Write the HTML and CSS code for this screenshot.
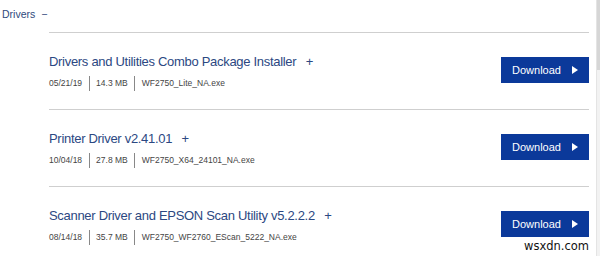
FILE: index.html
```html
<!DOCTYPE html>
<html>
<head>
<meta charset="utf-8">
<link rel="stylesheet" href="styles.css">
</head>
<body>
<div class="page">
  <div class="content">
    <div class="section-head">Drivers <span class="toggle">&minus;</span></div>
    <div class="items">
      <div class="item">
        <div class="info">
          <div class="title">Drivers and Utilities Combo Package Installer <span class="plus">+</span></div>
          <div class="meta"><span class="m first">05/21/19</span><span class="m">14.3 MB</span><span class="m">WF2750_Lite_NA.exe</span></div>
        </div>
        <a class="btn">Download <span class="tri"></span></a>
      </div>
      <div class="item">
        <div class="info">
          <div class="title">Printer Driver v2.41.01 <span class="plus">+</span></div>
          <div class="meta"><span class="m first">10/04/18</span><span class="m">27.8 MB</span><span class="m">WF2750_X64_24101_NA.exe</span></div>
        </div>
        <a class="btn">Download <span class="tri"></span></a>
      </div>
      <div class="item">
        <div class="info">
          <div class="title">Scanner Driver and EPSON Scan Utility v5.2.2.2 <span class="plus">+</span></div>
          <div class="meta"><span class="m first">08/14/18</span><span class="m">35.7 MB</span><span class="m">WF2750_WF2760_EScan_5222_NA.exe</span></div>
        </div>
        <a class="btn">Download <span class="tri"></span></a>
      </div>
    </div>
  </div>
  <div class="scroll"><div class="thumb"></div></div>
  <div class="watermark">wsxdn.com</div>
</div>
</body>
</html>
```

FILE: styles.css
```css
html, body {
  margin: 0;
  padding: 0;
  background: #fff;
}
body {
  font-family: "Liberation Sans", Arial, sans-serif;
  width: 600px;
  height: 256px;
  overflow: hidden;
}
.page {
  position: relative;
  display: flex;
  height: 256px;
}
.content {
  flex: 1;
}
.section-head {
  height: 32px;
  box-sizing: border-box;
  padding: 7px 0 0 2px;
  font-size: 10.5px;
  line-height: 14px;
  color: #2f4a7c;
}
.toggle {
  margin-left: 3px;
}
.items {
  margin: 0 7px 0 49px;
}
.item {
  border-top: 1px solid #cfcfcf;
  height: 77px;
  box-sizing: border-box;
  display: flex;
  align-items: center;
  justify-content: space-between;
}
.info {
  display: flex;
  flex-direction: column;
  gap: 6px;
  padding-top: 1px;
}
.title {
  font-size: 13px;
  letter-spacing: -0.3px;
  line-height: 17px;
  color: #2c4882;
}
.plus {
  margin-left: 6px;
}
.meta {
  display: flex;
  font-size: 8.5px;
  line-height: 15px;
  color: #444;
}
.m {
  border-left: 1px solid #888;
  padding: 0 6px 0 6px;
}
.m:last-child {
  padding-left: 7px;
}
.m.first {
  border-left: none;
  padding-left: 0;
  padding-right: 7px;
}
.btn {
  width: 88px;
  height: 26px;
  box-sizing: border-box;
  background: #0b399a;
  color: #fff;
  font-size: 11px;
  display: flex;
  align-items: center;
  justify-content: center;
  gap: 11px;
  margin-top: -2px;
}
.tri {
  width: 0;
  height: 0;
  border-top: 4px solid transparent;
  border-bottom: 4px solid transparent;
  border-left: 6px solid #fff;
}
.scroll {
  width: 3px;
  background: #f2f2f2;
  border-left: 1px solid #e4e4e4;
}
.thumb {
  height: 70px;
  background: #d6d6d6;
}
.watermark {
  position: absolute;
  right: 10px;
  bottom: 3px;
  font-family: "DejaVu Sans", sans-serif;
  font-size: 11.5px;
  color: #111;
  background: #fff;
  padding: 0 1px;
}
```
